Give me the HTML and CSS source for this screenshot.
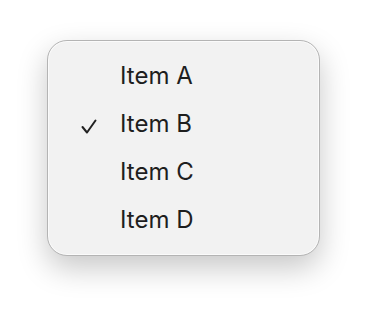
FILE: index.html
```html
<!DOCTYPE html>
<html lang="en">
<head>
    <meta charset="UTF-8">
    <meta name="viewport" content="width=device-width, initial-scale=1.0">
    <title>Menu</title>
    <link rel="stylesheet" href="styles.css">
</head>
<body>
    <div class="menu">
        <div class="menu-item">
            <span class="check"></span>
            <span class="label">Item A</span>
        </div>
        <div class="menu-item selected">
            <span class="check">
                <svg width="16" height="15" viewBox="0 0 16 15">
                    <polyline points="1.5,8 6,13.5 14.5,1.5" fill="none" stroke="#222" stroke-width="2" stroke-linecap="round" stroke-linejoin="round"/>
                </svg>
            </span>
            <span class="label">Item B</span>
        </div>
        <div class="menu-item">
            <span class="check"></span>
            <span class="label">Item C</span>
        </div>
        <div class="menu-item">
            <span class="check"></span>
            <span class="label">Item D</span>
        </div>
    </div>
</body>
</html>
```

FILE: styles.css
```css
html, body {
    height: 100%;
}

body {
    margin: 0;
    padding: 40px 0 0 47px;
    box-sizing: border-box;
    background: #fff;
    font-family: Inter, "Noto Sans", sans-serif;
    color: #1e1e1e;
}

.menu {
    width: 271px;
    padding: 11px 0;
    background-color: #f2f2f2;
    border: 1px solid #b4b4b4;
    border-radius: 20px;
    box-shadow: inset 0 0 0 1px #fbfbfb, 0 12px 30px rgba(0, 0, 0, 0.22);
}

.menu-item {
    display: flex;
    align-items: center;
    height: 48px;
}

.check {
    width: 39px;
    margin-left: 33px;
    padding-top: 4px;
    display: flex;
    align-items: center;
}

.label {
    font-size: 24px;
    line-height: 48px;
}
```
